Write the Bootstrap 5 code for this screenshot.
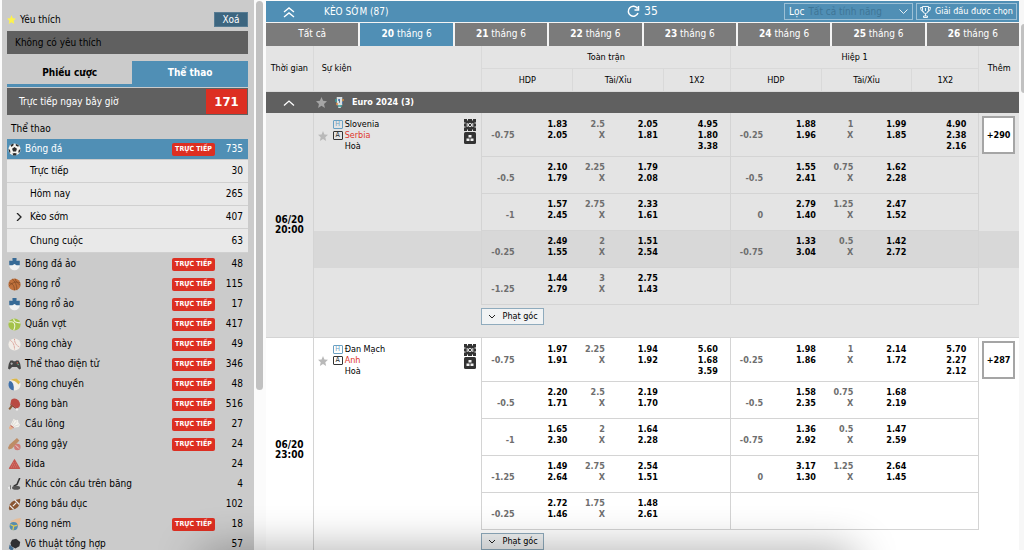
<!DOCTYPE html>
<html lang="vi">
<head>
<meta charset="utf-8">
<meta name="viewport" content="width=device-width, initial-scale=1">
<title>Kèo sớm</title>
<link rel="stylesheet" href="https://cdn.jsdelivr.net/npm/bootstrap@5.3.0/dist/css/bootstrap.min.css">
<style>
:root{--blue:#508fb5;--dark:#606060;--tab:#7b7b7b;--red:#dd2f22;--line:#d4d4d4}
body{font-family:"DejaVu Sans Condensed","DejaVu Sans","Noto Sans",sans-serif;font-size:9px;line-height:11px;color:#000;background:#fbfbfb;overflow:hidden}
button,select{font:inherit}
a{color:inherit;text-decoration:none}
.page{height:100vh;overflow:hidden}
/* sidebar */
.side{width:252px;margin-left:2px;padding:12px 6px 0 5px;background:#cbcbcb;font-size:10px;line-height:14px}
.clear-btn{width:34px;height:15px;background:#3d6680;border:1px solid #587c93;color:#fff;padding:0;line-height:12px}
.fav-empty{height:23px;background:var(--dark);padding:5px 8px}
.side-tabs{height:26px;margin-top:7px;border-bottom:3px solid var(--blue)}
.side-tabs button{border:0;background:none;font-weight:700;padding:0}
.side-tabs .on{width:48%;background:var(--blue);color:#fff}
.live-now{height:27px;margin-top:1px;background:var(--dark);color:#fff;padding:1px 1px 1px 12px}
.live-now b{width:41px;height:25px;background:var(--red);font-size:13px}
.heading{padding:7px 4px 3px}
.sport{height:20px;padding:0 5px 0 1px}
.sport svg{width:13px;height:13px;margin-right:4px}
.sport.current{background:var(--blue);color:#fff;margin-bottom:1px}
.live-tag{width:43px;height:13px;border-radius:2px;background:var(--red);color:#fff;font-size:7px;line-height:13px;font-weight:700;text-align:center}
.qty{width:28px;text-align:right}
.subs{margin-bottom:1px}
.sub{height:23px;background:#e9e9e9;border-bottom:1px solid #d0d0d0;padding:0 5px 0 8px}
.subs .sub:last-child{height:24px}
.sub svg{width:8px;height:8px}
.sub span{margin-left:7px}
.bar{width:12px}
.bar i{width:7px;height:389px;margin:1px 0 0 2px;border-radius:4px;background:#c1c1c1}
.bar2{width:5px;background:#f7f7f7;overflow:hidden}
.bar2 i{width:7px;height:69px;margin:24px 0 0 2px;border-radius:4px;background:#c1c1c1}
/* main area */
.topbar{height:21px;background:var(--blue);color:#fff;margin-top:1px;font-size:10px}
.topbar>div{width:33.33%}
.count{font-size:12px}
.tools{padding-right:2px}
.picker{width:129px;height:17px;border:1px solid #9cc0d6;padding:0 4px;margin-right:3px}
.picker select{appearance:none;background:none;border:0;color:#3f7595;padding:0;line-height:14px;outline:0}
.league-btn{width:101px;height:17px;border:1px solid #9cc0d6;background:none;color:#fff;font-size:9px;padding:0}
.days{gap:2px;height:24px;background:#f4f4f4;padding-top:1px}
.days button{flex:1 1 0;border:0;background:var(--tab);color:#fff;padding:0 0 2px;font-size:10px}
.days .on{background:var(--blue)}
.odds{table-layout:fixed;width:100%;border-collapse:separate;border-spacing:0}
.odds th{font-weight:400;text-align:center;background:#e4e4e4;border:solid #d9d9d9;border-width:0 0 1px 1px;height:23px;padding:0}
.odds thead tr:first-child th:first-child{border-left:0}
.odds .league td{height:21px;background:var(--dark);color:#fff;font-weight:700;font-size:9px;padding:0}
.odds td{padding:5px 0 0;vertical-align:top}
.match td{background:#e4e4e4}
.match.plain td{background:#fff}
.match .hot td:not(.when){background:#d8d8d8}
.match .when{vertical-align:middle;text-align:center;font-weight:700;padding:0;font-size:10px;line-height:10px;border-bottom:1px solid var(--line)}
.match tr{height:37px}
.match tr.first{height:44px}
.match tr.first td{padding-top:6px}
.match tr.first .when{padding:0}
.match tr.foot{height:33px}
.match .foot td{padding:3px 0 0;border-bottom:1px solid var(--line)}
.match .ev{border-left:1px solid var(--line)}
.match .hd,.match .ou,.match .x2{border-bottom:1px solid var(--line);font-weight:700}
.match .hd,.match .more{border-left:1px solid var(--line)}
.match .foot .more{border-left:0}
.match .pair{padding-right:5px}
.lab{width:38%;color:#6e6e6e;text-align:right}
.x2>div{padding-right:12px;text-align:right}
.star-col{width:19px;padding:11px 0 0 4px}
.ha{width:10px;height:9px;border:1px solid #333;border-radius:1px;font-size:7px;line-height:7px;text-align:center;margin-right:2px}
.ha.h{border-color:#6aa0c2;color:#6aa0c2}
.no{margin-left:12px}
.marks{width:17px}
.marks svg{display:block;width:12px;height:12px;margin-bottom:1px}
.fav{color:#e0362c}
.match .first .more{padding:3px 4px 0 3px}
.more button{width:100%;height:38px;background:#fff;border:2px solid #a5a5a5;font-weight:700;padding:0;display:block}
.corner{width:63px;height:17px;background:#f1f3f4;border:1px solid #8fabbd;padding:0}
.shade{position:fixed;left:210px;right:180px;bottom:-22px;height:8px;box-shadow:0 0 44px 10px rgba(0,0,0,.45);pointer-events:none}
</style>
<script src="https://cdn.jsdelivr.net/npm/bootstrap@5.3.0/dist/js/bootstrap.bundle.min.js"></script>
</head>
<body>
<svg width="0" height="0" class="position-absolute" aria-hidden="true">
<defs>
<symbol id="star" viewBox="0 0 16 16"><path fill="currentColor" d="M8 0l2.300 5.600 5.700.5-4.300 3.900 1.300 6L8 12.700 3 16l1.300-6L0 6.100l5.700-.5z"/></symbol>
<symbol id="soccer" viewBox="0 0 16 16"><circle cx="8" cy="8" r="7.500" fill="#f4f2ee"/><path fill="#2b2b2b" d="M8 4.800l3 2.200-1.100 3.400H6.200L5 7zM3 2.600L6.500.7 7 2.600 4.300 4.800zM9.500.8l3.800 2.100-.6 1.800-3-1.400zM.5 7l2 1.700.5 3.100-1.200.2zM15.500 7.300l-2.200 1.200-.8 3.200 1.800.1zM5.500 13l3-.8 2.500 1-1.500 2.200-3-.1z"/></symbol>
<symbol id="virtual" viewBox="0 0 16 16"><circle cx="8" cy="8.500" r="6.500" fill="#f2f2f2"/><path fill="#376a96" d="M5.500 0h5v3.500h4V9h-4L8 7.500 5.500 9h-4V3.500h4z"/></symbol>
<symbol id="basket" viewBox="0 0 16 16"><circle cx="8" cy="8" r="7.500" fill="#c0713c"/><path fill="none" stroke="#7a4523" stroke-width=".8" d="M1 10c5-5 9-6 14-4M5 1c4 3 6 8 6 14M1 6c4 0 7 3 7 9M9 1c0 3 3 5 6 8"/></symbol>
<symbol id="tennis" viewBox="0 0 16 16"><circle cx="8" cy="8" r="7.500" fill="#a4c24a"/><path fill="none" stroke="#eff5dc" stroke-width="1.300" d="M1 5c7-2 9 3 6 10M7 1c0 4 3 5 8 5"/></symbol>
<symbol id="base" viewBox="0 0 16 16"><circle cx="8" cy="8" r="7.500" fill="#f1ede7"/><path fill="none" stroke="#d48a80" d="M3 3c3 2 5 5 5 11M8 1c0 5 2 8 6 10" stroke-dasharray="1.500 .5"/></symbol>
<symbol id="pad" viewBox="0 0 16 16"><path fill="#464646" d="M3 3h3l1 1h2l1-1h3l2 4 1 6-2 1-3-3H5l-3 3-2-1 1-6z"/><path stroke="#bbb" d="M3 7h3M4.500 5.500v3"/><circle cx="11.500" cy="6" r="1" fill="#c65"/><circle cx="12.500" cy="8" r="1" fill="#6a8"/></symbol>
<symbol id="volley" viewBox="0 0 16 16"><circle cx="8" cy="8" r="7.500" fill="#f3f0e8"/><path fill="#d9b74c" d="M3 2.500Q7-.5 11 1l4 4-2 3Q9 3 3 2.500z"/><path fill="#3f6fa9" d="M2 3.500Q8 5 7 15.500 0 14 .5 7z"/></symbol>
<symbol id="table" viewBox="0 0 16 16"><path fill="#b94a42" d="M4 2q5-3 9 1 3 4 1 8l-3 2-8-6z"/><path fill="#8d302b" d="M3 7l8 6-2 0-6-4z"/><path stroke="#8b5c36" stroke-width="2.500" d="M5 9.500L1.500 14"/><circle cx="11" cy="14" r="1.500" fill="#eee"/></symbol>
<symbol id="shuttle" viewBox="0 0 16 16"><path fill="#f5f3ee" d="M7 1l3 2 2-1 1 4 2 2-2 3-7 1-3-3z"/><path stroke="#c4c0b8" stroke-width=".6" d="M4 10l4-8M5 11l6-7M6 11l8-3"/><circle cx="3.500" cy="12" r="2.300" fill="#e6b08b"/><path stroke="#b43b31" d="M3 9l4 3"/></symbol>
<symbol id="cricket" viewBox="0 0 16 16"><path fill="#bd8d66" d="M11 0l3 3L5 13l-4 1-1-2 2-4z"/><circle cx="11.500" cy="11" r="4" fill="#cf7b75"/><path stroke="#eee" d="M9.500 9l4 4"/></symbol>
<symbol id="snooker" viewBox="0 0 16 16"><path fill="#c4564f" d="M8 1l7 11.500q0 1-1 1H2q-1 0-1-1z"/><path stroke="#e0938c" stroke-dasharray="1 1.500" d="M6.500 6h3M5 8.500h6M4 11h8"/></symbol>
<symbol id="hockey" viewBox="0 0 16 16"><path fill="none" stroke="#333" stroke-width="2" d="M14.500 0L11 8l-4 2"/><ellipse cx="10" cy="12" rx="5" ry="2.500" fill="#555"/><path fill="#eee" d="M0 11l4-1v4l-3 0z"/><path stroke="#555" d="M3 9v5"/></symbol>
<symbol id="rugby" viewBox="0 0 16 16"><path fill="#8b5734" d="M1 13Q1 3 15 1q1 13-13 14z"/><path stroke="#eee" stroke-width="1.500" d="M6 10l4-4M2 9l5 5M8 2l6 6"/></symbol>
<symbol id="hand" viewBox="0 0 16 16"><path fill="#e5bd99" d="M3 4l7-3 6-1-2 8-3 4z"/><circle cx="7" cy="10" r="5" fill="#568cae"/><path fill="none" stroke="#e0ca55" stroke-width="1.500" d="M3 8l4 2 4-1M7 10l-1 5"/></symbol>
<symbol id="mma" viewBox="0 0 16 16"><path fill="#2f2f33" d="M5 2l5-1 5 4-1 5-5 3-5-3-1-4z"/><path fill="#476f93" d="M2 8l5 5-2 3-4-3z"/></symbol>
<symbol id="right" viewBox="0 0 8 8"><path fill="none" stroke="#222" stroke-width="1.300" d="M2 0l4 4-4 4"/></symbol>
<symbol id="pitch" viewBox="0 0 12 12"><path fill="#333" d="M0 0h3v1.500h1V0h4v1.500h1V0h3v3.500h-1.500v1H12v3h-1.500v1H12V12H9v-1.500H8V12H4v-1.500H3V12H0V8.500h1.500v-1H0v-3h1.500v-1H0z"/><circle cx="6" cy="6" r="1.700" fill="none" stroke="#e4e4e4"/><path stroke="#e4e4e4" d="M3.200 4v4M8.800 4v4"/></symbol>
<symbol id="blocks" viewBox="0 0 12 12"><rect width="12" height="12" rx="1.500" fill="#333"/><path fill="#f2f2f2" d="M4.500 3h3v2.500h-3zM2.500 6.500h3V9h-3zM6.500 6.500h3V9h-3z"/></symbol>
</defs>
</svg>
<div class="page d-flex">
<aside class="side flex-shrink-0">
<div class="d-flex align-items-center mb-1"><svg width="9" height="9" class="me-1" style="color:#fdf34c"><use href="#star"/></svg><span class="flex-fill">Yêu thích</span><button class="clear-btn">Xoá</button></div>
<div class="fav-empty">Không có yêu thích</div>
<div class="side-tabs d-flex"><button class="flex-fill">Phiếu cược</button><button class="on">Thể thao</button></div>
<div class="live-now d-flex align-items-center justify-content-between"><span>Trực tiếp ngay bây giờ</span><b class="d-flex align-items-center justify-content-center">171</b></div>
<div class="heading">Thể thao</div>
<nav id="sports" aria-label="Thể thao"></nav>
</aside>
<div class="bar flex-shrink-0"><i class="d-block"></i></div>
<main class="flex-fill" style="min-width:0">
<div class="topbar d-flex align-items-center">
<div class="d-flex align-items-center"><svg class="ms-3 me-4" width="14" height="12" viewBox="0 0 14 12" fill="none" stroke="#fff" stroke-width="1.400"><path d="M2 6l5-4 5 4M2 11l5-4 5 4"/></svg><span class="ms-1">KÈO SỚM (87)</span></div>
<div class="count d-flex align-items-center justify-content-center"><svg class="me-1" width="13" height="13" viewBox="0 0 13 13" fill="none" stroke="#fff" stroke-width="1.500"><path d="M10.500 3.500A5 5 0 1 0 11 8M11.500 1v4h-4"/></svg><span>35</span></div>
<div class="tools d-flex justify-content-end"><div class="picker d-flex align-items-center"><label for="filter" class="me-1">Lọc</label><select id="filter" class="flex-fill"><option>Tất cả tính năng</option></select><svg width="9" height="6" viewBox="0 0 9 6" fill="none" stroke="#e6f0f6"><path d="M.5.5l4 4 4-4"/></svg></div>
<button class="league-btn d-flex align-items-center justify-content-center"><svg class="me-1" width="11" height="12" viewBox="0 0 11 12" fill="none" stroke="#fff" stroke-width=".9"><path d="M2.500.5h6v4q-.5 3-3 3t-3-3zM2.500 1.500h-2q0 4 3 4M8.500 1.500h2q0 4-3 4M5.500 7.500V10M3.500 11.500V10h4v1.500zM5.500 2v3"/></svg>Giải đấu được chọn</button></div>
</div>
<div class="days d-flex" id="days"></div>
<table class="odds">
<colgroup><col style="width:6.200%"><col style="width:22.400%"><col style="width:12.100%"><col style="width:12%"><col style="width:8.900%"><col style="width:12.100%"><col style="width:12%"><col style="width:8.900%"><col style="width:5.400%"></colgroup>
<thead>
<tr><th rowspan="2">Thời gian</th><th rowspan="2" class="text-start ps-2">Sự kiện</th><th colspan="3">Toàn trận</th><th colspan="3">Hiệp 1</th><th rowspan="2">Thêm</th></tr>
<tr><th>HDP</th><th>Tài/Xỉu</th><th>1X2</th><th>HDP</th><th>Tài/Xỉu</th><th>1X2</th></tr>
</thead>
<tbody><tr class="league"><td colspan="9" class="align-middle"><div class="d-flex align-items-center"><svg class="ms-3 me-3" width="14" height="8" viewBox="0 0 14 8" fill="none" stroke="#fff" stroke-width="1.300"><path d="M2 6.500l5-4.500 5 4.500"/></svg><svg width="11" height="11" class="ms-1 me-2" style="color:#a5a5a5"><use href="#star"/></svg><svg width="9" height="12" viewBox="0 0 9 12" class="me-2"><path stroke="#d8e0e2" stroke-width="2.500" d="M3 1h3v6H3zM4.500 6v5"/><path stroke="#3fa09c" stroke-width="1.500" d="M1 2v3M3 9h4"/><path stroke="#d98a3c" stroke-width="1.500" d="M8 2v2M1 7h2"/><path stroke="#4470b4" stroke-width="1.500" d="M7 6h1M3 3h2"/></svg>Euro 2024 (3)</div></td></tr></tbody>
</table>
</main>
<div class="bar2 flex-shrink-0"><i class="d-block"></i></div>
</div>
<div class="shade"></div>
<script>
// name, count, has live games, icon
const sports=[["Bóng đá",735,1,"soccer"],["Bóng đá ảo",48,1,"virtual"],["Bóng rổ",115,1,"basket"],["Bóng rổ ảo",17,1,"virtual"],["Quần vợt",417,1,"tennis"],["Bóng chày",49,1,"base"],["Thể thao điện tử",346,1,"pad"],["Bóng chuyền",48,1,"volley"],["Bóng bàn",516,1,"table"],["Cầu lông",27,1,"shuttle"],["Bóng gậy",24,1,"cricket"],["Bida",24,0,"snooker"],["Khúc côn cầu trên băng",4,0,"hockey"],["Bóng bầu dục",102,0,"rugby"],["Bóng ném",18,1,"hand"],["Võ thuật tổng hợp",57,0,"mma"]];
const subs=[["Trực tiếp",30],["Hôm nay",265],["Kèo sớm",407],["Chung cuộc",63]];
const icon=id=>`<svg aria-hidden="true"><use href="#${id}"/></svg>`;
const sportRow=([n,c,live,i],k)=>`<a href="#" class="sport d-flex align-items-center ${k?"":"current"}">${icon(i)}<span class="flex-fill">${n}</span>${live?'<span class="live-tag">TRỰC TIẾP</span>':""}<span class="qty">${c}</span></a>`;
const subRow=([n,c])=>`<a href="#" class="sub d-flex align-items-center">${n==="Kèo sớm"?icon("right"):'<svg></svg>'}<span class="flex-fill">${n}</span>${c}</a>`;
document.getElementById("sports").innerHTML=sportRow(sports[0],0)+`<div class="subs">${subs.map(subRow).join("")}</div>`+sports.slice(1).map((s,k)=>sportRow(s,k+1)).join("");
document.getElementById("days").innerHTML='<button>Tất cả</button>'+[20,21,22,23,24,25,26].map(d=>`<button class="${d===20?"on":""}"><b>${d}</b> tháng 6</button>`).join("");
// each line: handicap, home, away, total, over, under for both periods; 1X2 on the first line
const matches=[
{time:"06/20<br>20:00",home:"Slovenia",away:"Serbia",more:290,hot:3,x:[["4.95","1.80","3.38"],["4.90","2.38","2.16"]],
lines:["-0.75 1.83 2.05 2.5 2.05 1.81 -0.25 1.88 1.96 1 1.99 1.85","-0.5 2.10 1.79 2.25 1.79 2.08 -0.5 1.55 2.41 0.75 1.62 2.28","-1 1.57 2.45 2.75 2.33 1.61 0 2.79 1.40 1.25 2.47 1.52","-0.25 2.49 1.55 2 1.51 2.54 -0.75 1.33 3.04 0.5 1.42 2.72","-1.25 1.44 2.79 3 2.75 1.43"]},
{time:"06/20<br>23:00",home:"Đan Mạch",away:"Anh",more:287,plain:1,x:[["5.60","1.68","3.59"],["5.70","2.27","2.12"]],
lines:["-0.75 1.97 1.91 2.25 1.94 1.92 -0.25 1.98 1.86 1 2.14 1.72","-0.5 2.20 1.71 2.5 2.19 1.70 -0.5 1.58 2.35 0.75 1.68 2.19","-1 1.65 2.30 2 1.64 2.28 -0.75 1.36 2.92 0.5 1.47 2.59","-1.25 1.49 2.64 2.75 2.54 1.51 0 3.17 1.30 1.25 2.64 1.45","-0.25 2.72 1.46 1.75 1.48 2.61"]}];
const pair=(a,b,c,d)=>`<div class="pair d-flex justify-content-between"><div class="lab">${a}<br>${b}</div><div class="text-end">${c}<br>${d}</div></div>`;
const half=(v,x)=>`<td class="hd">${v.length?pair("&nbsp;",v[0],v[1],v[2]):""}</td><td class="ou">${v.length?pair(v[3],"X",v[4],v[5]):""}</td><td class="x2"><div>${x?x.join("<br>"):""}</div></td>`;
const teams=m=>`<div class="d-flex"><div class="star-col"><svg width="10" height="10" style="color:#b9b9b9"><use href="#star"/></svg></div><div class="flex-fill"><div class="d-flex align-items-center"><span class="ha h">H</span>${m.home}</div><div class="d-flex align-items-center fav"><span class="ha text-dark">A</span>${m.away}</div><div class="no">Hoà</div></div><div class="marks">${icon("pitch")}${icon("blocks")}</div></div>`;
document.querySelector(".odds").insertAdjacentHTML("beforeend",matches.map(m=>`<tbody class="match ${m.plain?"plain":""}">`+m.lines.map((l,i)=>{const v=l.split(" ");
return `<tr class="${i?"":"first"} ${i===m.hot?"hot":""}">${i?"":`<td class="when" rowspan="6">${m.time}</td>`}<td class="ev">${i?"":teams(m)}</td>${half(v.slice(0,6),i?0:m.x[0])}${half(v.slice(6),i?0:m.x[1])}<td class="more">${i?"":`<button>+${m.more}</button>`}</td></tr>`}).join("")+`<tr class="foot"><td class="ev"></td><td colspan="6"><button class="corner"><svg class="me-1" width="8" height="6" viewBox="0 0 8 6" fill="none" stroke="#222"><path d="M1 1l3 3 3-3"/></svg> Phạt góc</button></td><td class="more"></td></tr></tbody>`).join(""));
</script>
</body>
</html>
